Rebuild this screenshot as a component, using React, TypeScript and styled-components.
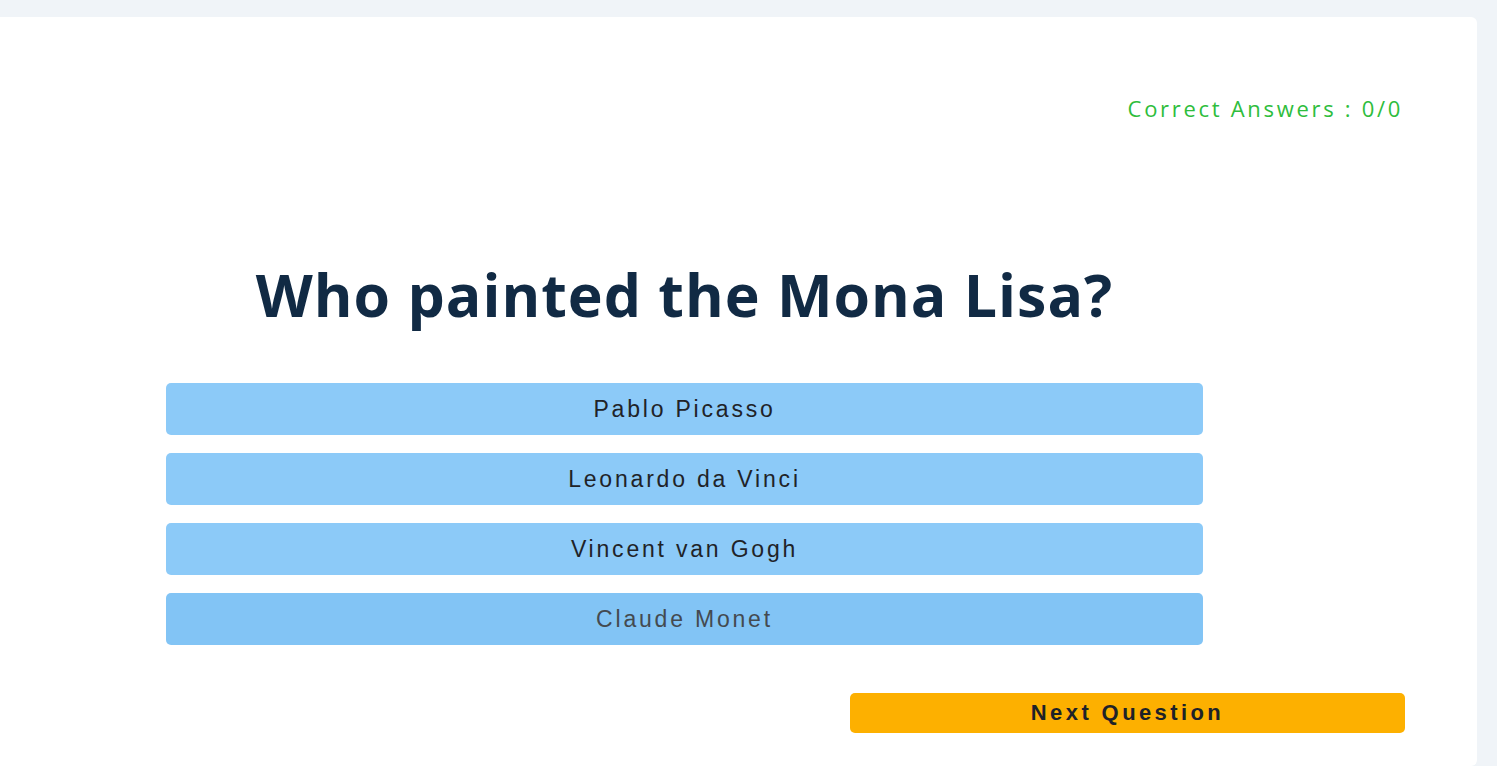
import React, { useState } from 'react';
import styled, { createGlobalStyle } from 'styled-components';

const GlobalStyle = createGlobalStyle`
  html, body {
    margin: 0;
    padding: 0;
    background: #f0f4f8;
    overflow: hidden;
  }
`;

const Page = styled.div`
  padding-top: 17px;
  height: 749px;
`;

const Card = styled.main`
  margin-left: -12px;
  width: 1489px;
  height: 100%;
  box-sizing: border-box;
  background: #ffffff;
  border-radius: 6px;
  padding: 76px 72px 0 12px;
  display: flex;
  flex-direction: column;
`;

const ScoreRow = styled.div`
  display: flex;
  justify-content: flex-end;
`;

const Score = styled.p`
  margin: 0;
  margin-right: 2px;
  font-family: 'Open Sans', 'Noto Sans', sans-serif;
  font-size: 22px;
  letter-spacing: 2.7px;
  color: #2ebd3c;
  line-height: 30px;
`;

const Quiz = styled.section`
  width: 1037px;
  margin: 137px 0 0 166px;
  display: flex;
  flex-direction: column;
`;

const Question = styled.h1`
  margin: 0 0 55px;
  text-align: center;
  font-family: 'Open Sans', 'Noto Sans', sans-serif;
  font-weight: 700;
  font-size: 59px;
  letter-spacing: 1px;
  line-height: 68px;
  color: #112a44;
`;

const Options = styled.div`
  display: flex;
  flex-direction: column;
  gap: 18px;
`;

const Option = styled.button<{ $hover?: boolean }>`
  height: 52px;
  border: none;
  border-radius: 5px;
  background: ${p => (p.$hover ? '#82c4f5' : '#8ccaf8')};
  color: ${p => (p.$hover ? '#444a50' : '#1f2328')};
  font-family: 'Liberation Sans', Arial, sans-serif;
  font-size: 23px;
  letter-spacing: 2.8px;
  cursor: pointer;
  padding: 0;
`;

const Footer = styled.div`
  display: flex;
  justify-content: flex-end;
  margin-top: 48px;
`;

const NextButton = styled.button`
  width: 555px;
  height: 40px;
  border: none;
  border-radius: 5px;
  background: #fdb000;
  color: #1e2228;
  font-family: 'Liberation Sans', Arial, sans-serif;
  font-weight: 700;
  font-size: 22px;
  letter-spacing: 3.4px;
  cursor: pointer;
  padding: 0;
`;

const answers = ['Pablo Picasso', 'Leonardo da Vinci', 'Vincent van Gogh', 'Claude Monet'];

export default function App() {
  const [hovered] = useState(3);
  return (
    <>
      <GlobalStyle />
      <Page>
        <Card>
          <ScoreRow>
            <Score>Correct Answers : 0/0</Score>
          </ScoreRow>
          <Quiz>
            <Question>Who painted the Mona Lisa?</Question>
            <Options>
              {answers.map((a, i) => (
                <Option key={a} $hover={i === hovered}>
                  {a}
                </Option>
              ))}
            </Options>
          </Quiz>
          <Footer>
            <NextButton>Next Question</NextButton>
          </Footer>
        </Card>
      </Page>
    </>
  );
}
